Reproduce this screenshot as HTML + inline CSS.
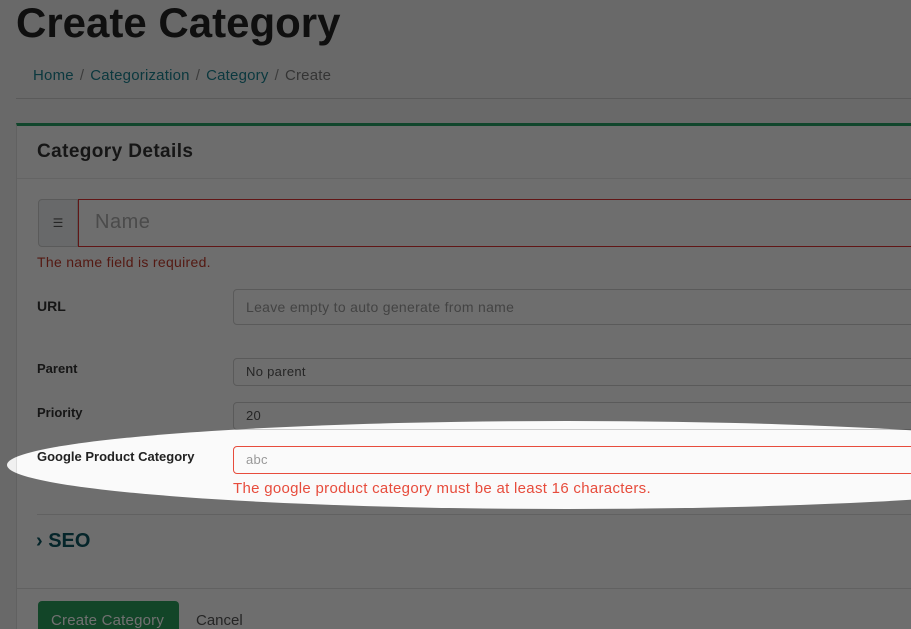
<!DOCTYPE html>
<html style="width:911px;height:629px;overflow:hidden"><head><style>
*{box-sizing:border-box;margin:0;padding:0}
body{width:911px;height:629px;overflow:hidden;background:#f0f0f0;font-family:"Liberation Sans",sans-serif;position:relative;color:#333}
h1{position:absolute;left:16px;top:-1px;font-size:42px;font-weight:bold;color:#222;letter-spacing:0px}
.bc{position:absolute;left:33px;top:67px;font-size:15px;color:#777;letter-spacing:0.2px}
.bc a{color:#1a7f8e;text-decoration:none}
.bc span{margin:0 6px;color:#888}
.hr{position:absolute;left:16px;right:0;top:98px;border-top:1px solid #ccc}
.card{position:absolute;left:16px;top:123px;width:1000px;height:600px;background:#fafafa;border-top:3px solid #28a065;border-left:1px solid #ddd}
.ch{height:53px;border-bottom:1px solid #e3e3e3;background:#f7f7f7;padding:15px 20px;font-size:19px;font-weight:bold;color:#333;letter-spacing:0.4px}
.abs{position:absolute}
.ig{left:21px;top:73px;width:40px;height:48px;background:#eceff1;border:1px solid #ccc;border-radius:4px 0 0 4px;font-size:12px;text-align:center;line-height:46px;color:#555}
.nm{left:61px;top:73px;width:900px;height:48px;border:1px solid #d33;font-size:20px;color:#aaa;padding:11px 16px;letter-spacing:0.5px}
.err{color:#c0392b;font-size:14px;letter-spacing:0.3px}
.lbl{font-size:13px;font-weight:bold;color:#333}
.inp{border:1px solid #ccc;border-radius:4px;font-size:13px;color:#999;padding:0 12px;letter-spacing:0.3px}
.btn{left:21px;top:475px;width:141px;height:40px;background:#2a9d5c;border-radius:4px;color:#fff;font-size:15px;padding:11px 13px;letter-spacing:0.2px}
.ov{position:absolute;left:7px;top:421px;width:1120px;height:88px;border-radius:50%;box-shadow:0 0 0 2000px rgba(0,0,0,0.56);z-index:10}
</style></head><body>
<h1>Create Category</h1>
<div class="bc"><a>Home</a><span>/</span><a>Categorization</a><span>/</span><a>Category</a><span>/</span>Create</div>
<div class="hr"></div>
<div class="card">
<div class="ch">Category Details</div>
<div class="abs ig">☰</div>
<div class="abs nm">Name</div>
<div class="abs err" style="left:20px;top:128px">The name field is required.</div>
<div class="abs lbl" style="left:20px;top:172px;font-size:14px">URL</div>
<div class="abs inp" style="left:216px;top:163px;width:800px;height:36px;line-height:34px;font-size:14px">Leave empty to auto generate from name</div>
<div class="abs lbl" style="left:20px;top:235px">Parent</div>
<div class="abs inp" style="left:216px;top:232px;width:800px;height:28px;line-height:26px;color:#555">No parent</div>
<div class="abs lbl" style="left:20px;top:279px">Priority</div>
<div class="abs inp" style="left:216px;top:276px;width:800px;height:28px;line-height:26px;color:#555">20</div>
<div class="abs lbl" style="left:20px;top:323px;color:#222">Google Product Category</div>
<div class="abs inp" style="left:216px;top:320px;width:800px;height:28px;line-height:26px;border-color:#e74c3c">abc</div>
<div class="abs err" style="left:216px;top:354px;color:#e74c3c;font-size:15px">The google product category must be at least 16 characters.</div>
<div class="abs" style="left:20px;top:388px;width:1000px;border-top:1px solid #ddd"></div>
<div class="abs" style="left:19px;top:404px;font-size:20px;font-weight:bold;color:#0c5560">› SEO</div>
<div class="abs" style="left:0;top:462px;width:1000px;border-top:1px solid #ddd"></div>
<div class="abs btn">Create Category</div>
<div class="abs" style="left:179px;top:486px;font-size:15px;color:#555">Cancel</div>
</div>
<div class="ov"></div>
</body></html>
